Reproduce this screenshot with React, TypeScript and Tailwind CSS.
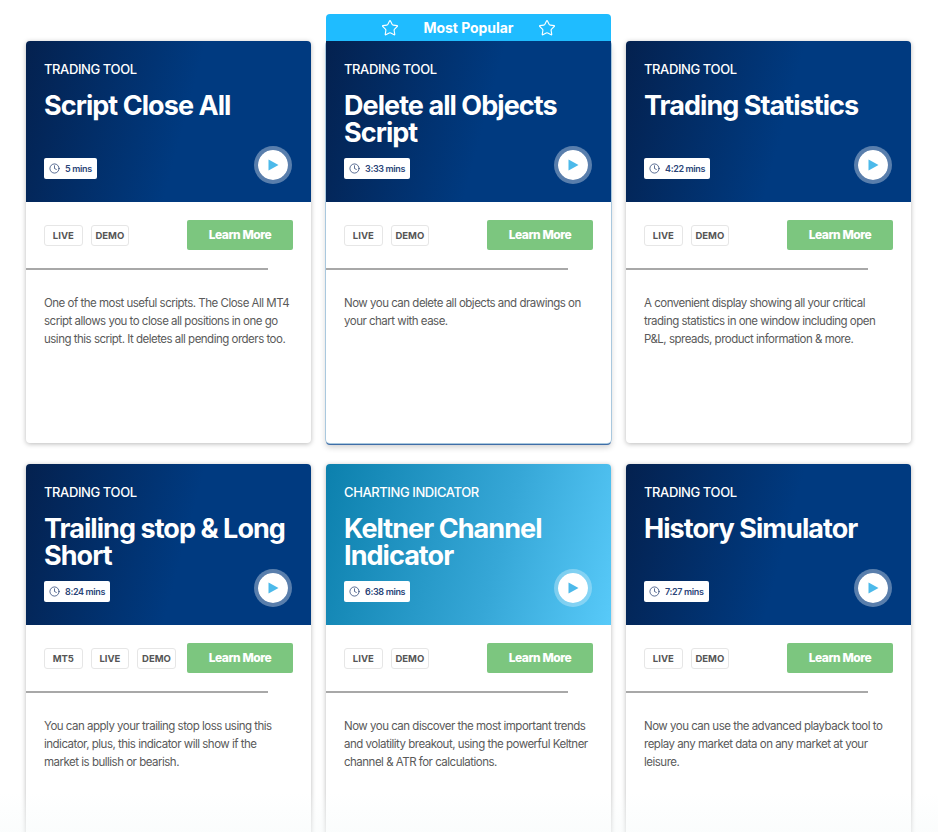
import { Clock, Star } from "lucide-react";

type Tool = {
  label: string;
  title: string;
  time: string;
  tags: string[];
  text: string;
  popular?: boolean;
  light?: boolean;
};

const tools: Tool[] = [
  {
    label: "Trading Tool",
    title: "Script Close All",
    time: "5 mins",
    tags: ["LIVE", "DEMO"],
    text: "One of the most useful scripts. The Close All MT4 script allows you to close all positions in one go using this script. It deletes all pending orders too.",
  },
  {
    label: "Trading Tool",
    title: "Delete all Objects Script",
    time: "3:33 mins",
    tags: ["LIVE", "DEMO"],
    text: "Now you can delete all objects and drawings on your chart with ease.",
    popular: true,
  },
  {
    label: "Trading Tool",
    title: "Trading Statistics",
    time: "4:22 mins",
    tags: ["LIVE", "DEMO"],
    text: "A convenient display showing all your critical trading statistics in one window including open P&L, spreads, product information & more.",
  },
  {
    label: "Trading Tool",
    title: "Trailing stop & Long Short",
    time: "8:24 mins",
    tags: ["MT5", "LIVE", "DEMO"],
    text: "You can apply your trailing stop loss using this indicator, plus, this indicator will show if the market is bullish or bearish.",
  },
  {
    label: "Charting Indicator",
    title: "Keltner Channel Indicator",
    time: "6:38 mins",
    tags: ["LIVE", "DEMO"],
    text: "Now you can discover the most important trends and volatility breakout, using the powerful Keltner channel & ATR for calculations.",
    light: true,
  },
  {
    label: "Trading Tool",
    title: "History Simulator",
    time: "7:27 mins",
    tags: ["LIVE", "DEMO"],
    text: "Now you can use the advanced playback tool to replay any market data on any market at your leisure.",
  },
];

const PlayButton = ({ light }: { light?: boolean }) => {
  return (
    <div
      className={`flex h-[38px] w-[38px] items-center justify-center rounded-full border-4 bg-white bg-clip-padding ${
        light ? "border-white/30" : "border-white/35"
      }`}
    >
      <svg width="11" height="12" viewBox="0 0 11 12" className="ml-[1px]">
        <path d="M0.5 0.5 L10.5 6 L0.5 11.5 Z" fill="#4cb9ea" />
      </svg>
    </div>
  );
};

const Card = ({ tool }: { tool: Tool }) => {
  return (
    <div
      className={`relative h-[402px] rounded-[4px] bg-white ${
        tool.popular
          ? "shadow-[0_0_0_1px_#a9c8de,0_2px_0_0_#3f6ea8,0_4px_6px_rgba(0,0,0,0.2)]"
          : "shadow-[0_1px_5px_rgba(0,0,0,0.28)]"
      }`}
    >
      {tool.popular && (
        <div className="absolute -top-[27px] left-0 right-0 flex h-[27px] items-center justify-center gap-[24px] rounded-t-[4px] bg-[#1fbcff] text-[14px] font-bold tracking-[-0.05px] text-white">
          <Star size={18} strokeWidth={1.5} />
          <span>Most Popular</span>
          <Star size={18} strokeWidth={1.5} />
        </div>
      )}

      <div
        className={`flex h-[161px] flex-col pl-[18px] pr-[19px] pt-[20px] text-white ${tool.popular ? "" : "rounded-t-[4px]"} ${
          tool.light
            ? "bg-[linear-gradient(105deg,#0c80ad_0%,#36a7d7_60%,#58caf9_100%)]"
            : "bg-[linear-gradient(105deg,#04214f_0%,#003a80_55%,#003a80_100%)]"
        }`}
      >
        <div className="h-[16px] text-[13px] font-medium uppercase leading-[16px] tracking-[-0.4px]">
          {tool.label}
        </div>
        <h3 className="mt-[15px] h-[54px] text-[27px] font-bold leading-[27px] tracking-[-0.95px]">
          {tool.title}
        </h3>
        <div className="flex items-end justify-between">
          <div className="mb-[5px] flex h-[21px] items-center gap-[5px] rounded-[2px] bg-white pl-[5px] pr-[5px] text-[9px] font-semibold tracking-[-0.35px] text-[#2a4478]">
            <Clock size={11} strokeWidth={1.6} className="text-[#1f3a6e]" />
            <span>{tool.time}</span>
          </div>
          <PlayButton light={tool.light} />
        </div>
      </div>

      <div className="flex items-center justify-between pl-[18px] pr-[18px] pt-[18px]">
        <div className="flex gap-[8px] pt-[1px]">
          {tool.tags.map((tag) => (
            <span
              key={tag}
              className="flex h-[21px] w-[38.6px] items-center justify-center rounded-[3px] border border-[#e6e6e6] pt-[1px] text-[9.5px] font-bold text-[#555555]"
            >
              {tag}
            </span>
          ))}
        </div>
        <button className="h-[30px] w-[106px] rounded-[2px] bg-[#7cc67f] text-[12px] font-extrabold tracking-[-0.45px] text-white">
          Learn More
        </button>
      </div>

      <div className="mt-[18px] h-[2px] w-[242px] bg-[#a8a8a8]" />

      <p className="px-[18px] pt-[24px] text-[11.5px] leading-[18px] tracking-[-0.5px] text-[#5a5a5a]">{tool.text}</p>
    </div>
  );
};

export default function App() {
  return (
    <div className="relative h-[832px] overflow-hidden bg-white font-['Inter',sans-serif]">
      <div className="grid w-[885px] translate-x-[26px] grid-cols-3 gap-x-[15px] gap-y-[21px] pt-[41px]">
        {tools.map((tool) => (
          <Card key={tool.title} tool={tool} />
        ))}
      </div>
      <div className="pointer-events-none absolute bottom-0 left-0 right-0 h-[40px] bg-gradient-to-b from-transparent to-[#f6fafa]/50" />
    </div>
  );
}
